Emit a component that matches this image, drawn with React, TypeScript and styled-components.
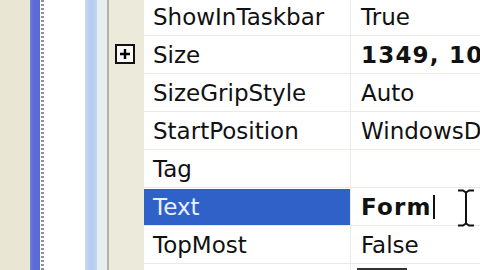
import styled, { createGlobalStyle } from "styled-components";

const GlobalStyle = createGlobalStyle`
   html, body {
      margin: 0;
      padding: 0;
      background: #ffffff;
   }
   body {
      font-family: "DejaVu Sans", Verdana, sans-serif;
   }
`;

type Prop = {
   name: string;
   value: string;
   bold?: boolean;
   expandable?: boolean;
   selected?: boolean;
   editing?: boolean;
   swatch?: boolean;
};

const properties: Prop[] = [
   { name: "ShowInTaskbar", value: "True" },
   { name: "Size", value: "1349, 1029", bold: true, expandable: true },
   { name: "SizeGripStyle", value: "Auto" },
   { name: "StartPosition", value: "WindowsDefaultLocation" },
   { name: "Tag", value: "" },
   { name: "Text", value: "Form", bold: true, selected: true, editing: true },
   { name: "TopMost", value: "False" },
   { name: "", value: "", swatch: true },
];

export default function App() {
   return (
      <>
         <GlobalStyle />
         <Screen>
            <OuterPane />
            <SplitterBar />
            <DottedEdge />
            <DesignSurface />
            <ScrollTrack />
            <ScrollGutter />
            <PaneBorder />
            <PropertyGrid>
               {properties.map((p, i) => (
                  <Row key={i}>
                     <Margin>
                        {p.expandable && (
                           <ExpandBox>
                              <svg width="12" height="12" viewBox="0 0 12 12">
                                 <path d="M1 6h10M6 1v10" stroke="#000" strokeWidth="2.4" />
                              </svg>
                           </ExpandBox>
                        )}
                     </Margin>
                     <NameCell $selected={p.selected}>{p.name}</NameCell>
                     <ValueCell $bold={p.bold}>
                        {p.swatch && <Swatch />}
                        {p.value}
                        {p.editing && <Caret />}
                        {p.editing && (
                           <MouseCursor width="18" height="38" viewBox="0 0 18 38">
                              <path
                                 d="M1 1.5h5l3 2 3-2h5M9 3.5v31M1 36.5h5l3-2 3 2h5"
                                 fill="none"
                                 stroke="#fff"
                                 strokeWidth="4"
                              />
                              <path
                                 d="M1 1.5h5l3 2 3-2h5M9 3.5v31M1 36.5h5l3-2 3 2h5"
                                 fill="none"
                                 stroke="#111"
                                 strokeWidth="2"
                              />
                           </MouseCursor>
                        )}
                     </ValueCell>
                  </Row>
               ))}
            </PropertyGrid>
         </Screen>
      </>
   );
}

const Screen = styled.div`
   display: flex;
   width: 480px;
   height: 270px;
   overflow: hidden;
   background: #ffffff;
`;

const OuterPane = styled.div`
   width: 30px;
   flex-shrink: 0;
   background: #e9e7d3;
`;

const SplitterBar = styled.div`
   width: 10px;
   flex-shrink: 0;
   background: linear-gradient(90deg, #7482dc 0%, #5d6cd6 30%, #5a69d4 100%);
`;

const DottedEdge = styled.div`
   width: 4px;
   flex-shrink: 0;
   background: repeating-linear-gradient(
      180deg,
      #8a90a8 0px,
      #8a90a8 2px,
      #ffffff 2px,
      #ffffff 4px
   );
   border-left: 1px solid #ffffff;
   box-sizing: border-box;
`;

const DesignSurface = styled.div`
   width: 41px;
   flex-shrink: 0;
   background: #ffffff;
`;

const ScrollTrack = styled.div`
   width: 12px;
   flex-shrink: 0;
   background: linear-gradient(90deg, #c6d8f4 0%, #b4cbef 50%, #c3d6f3 100%);
`;

const ScrollGutter = styled.div`
   width: 10px;
   flex-shrink: 0;
   background: #e6eef0;
`;

const PaneBorder = styled.div`
   width: 2px;
   flex-shrink: 0;
   background: #b7b3a2;
`;

const PropertyGrid = styled.div`
   flex: 1;
   display: flex;
   flex-direction: column;
   margin-top: -2px;
   background: #ffffff;
`;

const Row = styled.div`
   display: grid;
   grid-template-columns: 35px 207px 1fr;
   height: 38px;
   flex-shrink: 0;
`;

const Margin = styled.div`
   background: #ecebdb;
   display: flex;
   align-items: center;
   padding-left: 6px;
`;

const ExpandBox = styled.div`
   width: 20px;
   height: 20px;
   box-sizing: border-box;
   border: 2px solid #111;
   background: #f8f8f4;
   display: flex;
   align-items: center;
   justify-content: center;
   margin-top: -2px;
`;

const NameCell = styled.div<{ $selected?: boolean }>`
   display: flex;
   align-items: center;
   padding-left: 9px;
   font-size: 23px;
   white-space: nowrap;
   overflow: hidden;
   color: ${(p) => (p.$selected ? "#e6f2ff" : "#111")};
   background: ${(p) => (p.$selected ? "#2f61c9" : "#ffffff")};
   border-bottom: 1px solid #eaeae2;
   border-right: 1px solid #eaeae2;
   box-shadow: ${(p) => (p.$selected ? "inset 0 1px 0 #ffffff" : "none")};
`;

const ValueCell = styled.div<{ $bold?: boolean }>`
   position: relative;
   display: flex;
   align-items: center;
   padding-left: 10px;
   font-size: 23px;
   font-weight: ${(p) => (p.$bold ? 700 : 400)};
   letter-spacing: ${(p) => (p.$bold ? "1.2px" : "0")};
   white-space: nowrap;
   overflow: visible;
   color: #111;
   border-bottom: 1px solid #eaeae2;
`;

const Caret = styled.span`
   display: inline-block;
   width: 2px;
   height: 24px;
   margin-left: 1px;
   background: #111;
`;

const Swatch = styled.span`
   position: absolute;
   left: 6px;
   top: 4px;
   width: 50px;
   height: 20px;
   box-sizing: border-box;
   border: 2px solid #333;
   background: #5a5a5a;
`;

const MouseCursor = styled.svg`
   position: absolute;
   left: 106px;
   top: 1px;
`;
